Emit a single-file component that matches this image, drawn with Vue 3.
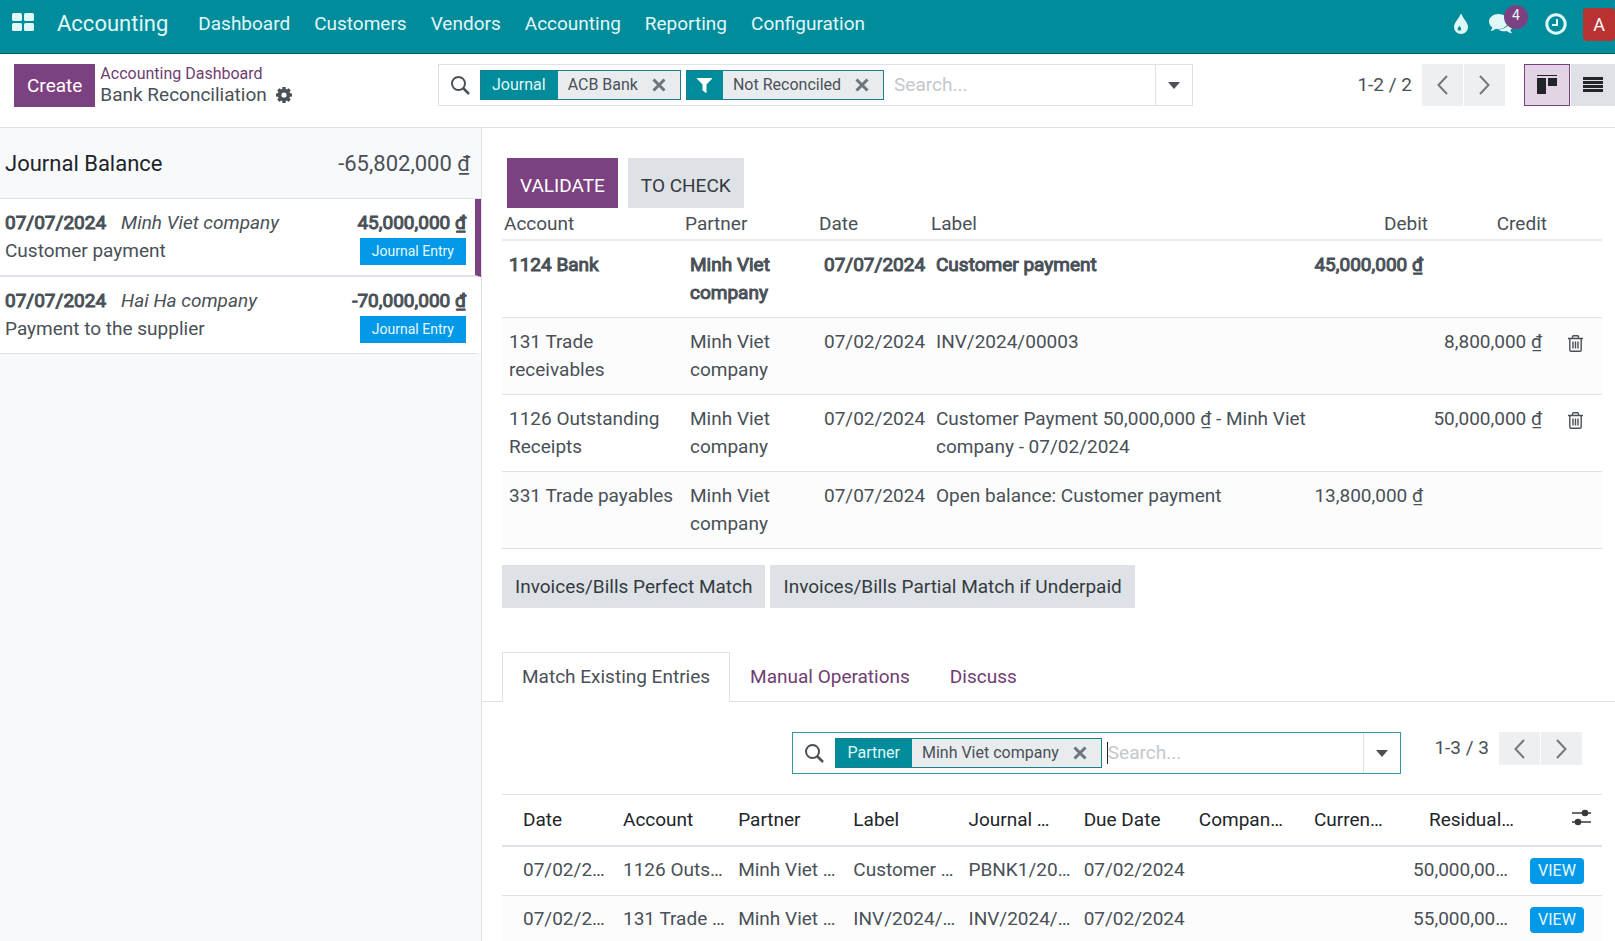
<script setup>
import { ref } from 'vue'

const menus = ['Dashboard', 'Customers', 'Vendors', 'Accounting', 'Reporting', 'Configuration']

const statements = [
  { date: '07/07/2024', partner: 'Minh Viet company', label: 'Customer payment', amount: '45,000,000 ₫', selected: true },
  { date: '07/07/2024', partner: 'Hai Ha company', label: 'Payment to the supplier', amount: '-70,000,000 ₫', selected: false },
]

const lines = [
  { account: '1124 Bank', partner: 'Minh Viet company', date: '07/07/2024', label: 'Customer payment', debit: '45,000,000 ₫', credit: '', main: true },
  { account: '131 Trade receivables', partner: 'Minh Viet company', date: '07/02/2024', label: 'INV/2024/00003', debit: '', credit: '8,800,000 ₫', removable: true },
  { account: '1126 Outstanding Receipts', partner: 'Minh Viet company', date: '07/02/2024', label: 'Customer Payment 50,000,000 ₫ - Minh Viet company - 07/02/2024', debit: '', credit: '50,000,000 ₫', removable: true },
  { account: '331 Trade payables', partner: 'Minh Viet company', date: '07/07/2024', label: 'Open balance: Customer payment', debit: '13,800,000 ₫', credit: '' },
]

const entryHeads = ['Date', 'Account', 'Partner', 'Label', 'Journal …', 'Due Date', 'Compan…', 'Curren…']
const entries = [
  { cells: ['07/02/2…', '1126 Outs…', 'Minh Viet …', 'Customer …', 'PBNK1/20…', '07/02/2024', '', ''], residual: '50,000,00…' },
  { cells: ['07/02/2…', '131 Trade …', 'Minh Viet …', 'INV/2024/…', 'INV/2024/…', '07/02/2024', '', ''], residual: '55,000,00…' },
]

const tabs = ['Match Existing Entries', 'Manual Operations', 'Discuss']
const activeTab = ref(tabs[0])
const search = ref('')
const entrySearch = ref('')
</script>

<template>
  <div class="app">
    <header class="topbar">
      <button class="apps" aria-label="Apps">
        <svg width="22" height="18" viewBox="0 0 22 18" fill="currentColor">
          <rect width="10" height="8" rx="1.5" /><rect x="12" width="10" height="8" rx="1.5" />
          <rect y="10" width="10" height="8" rx="1.5" /><rect x="12" y="10" width="10" height="8" rx="1.5" />
        </svg>
      </button>
      <a href="#" class="brand">Accounting</a>
      <nav class="menu">
        <a v-for="m in menus" :key="m" href="#">{{ m }}</a>
      </nav>
      <div class="systray">
        <button aria-label="Theme">
          <svg width="14" height="20" viewBox="0 0 14 20">
            <path fill="currentColor" d="M7 0c.5 0 .8.3.9.8C8.800 4.500 14 8.500 14 13a7 7 0 0 1-14 0C0 8.500 5.200 4.500 6.100.8 6.200.3 6.500 0 7 0z" />
            <path fill="#008c9a" d="M5.500 11.500c.4 1.400 1.700 2 1.700 3.500a1.800 1.800 0 0 1-3.600 0c0-1.500 1.500-2.100 1.900-3.500z" />
          </svg>
        </button>
        <button class="chat" aria-label="Messages">
          <svg width="25" height="20" viewBox="0 0 25 20" fill="currentColor">
            <path d="M9.500 0C14.800 0 19 3.300 19 7.500S14.800 15 9.500 15c-.9 0-1.800-.1-2.600-.3C5.500 15.800 3.500 16.700 1.500 16.900c.9-1 1.600-2.200 1.800-3.600C1.300 12 0 9.900 0 7.500 0 3.300 4.200 0 9.500 0z" />
            <path d="M20.600 5.500c2.400 1.200 3.900 3.100 3.900 5.400 0 2-1.200 3.900-3.200 5.200.3 1.200.9 2.200 1.900 3.100-2.200-.2-4-1-5.500-2.200-.8.200-1.500.3-2.400.3-2.400 0-4.600-.7-6.200-1.800 6.200.2 11.400-3.600 11.500-9z" />
          </svg>
          <span class="badge">4</span>
        </button>
        <button aria-label="Activities">
          <svg width="22" height="22" viewBox="0 0 22 22" fill="none" stroke="currentColor">
            <circle cx="11" cy="11" r="9.200" stroke-width="3" /><path d="M12 6v6H7" stroke-width="2" />
          </svg>
        </button>
        <button class="avatar">A</button>
      </div>
    </header>

    <section class="control">
      <div class="crumbs">
        <button class="btn primary">Create</button>
        <div class="trail">
          <a href="#">Accounting Dashboard</a>
          <div class="current">
            <span>Bank Reconciliation</span>
            <button class="plain" aria-label="Settings">
              <svg width="16" height="16" viewBox="0 0 16 16">
                <g fill="#495057">
                  <circle cx="8" cy="8" r="6.200" />
                  <rect v-for="a in [0, 45, 90, 135]" :key="a" x="6.300" y="0" width="3.400" height="16" rx=".6" :transform="`rotate(${a} 8 8)`" />
                </g>
                <circle cx="8" cy="8" r="2.600" fill="#fff" />
              </svg>
            </button>
          </div>
        </div>
      </div>

      <div class="searchbar">
        <svg class="lens" width="19" height="19" viewBox="0 0 19 19" fill="none" stroke="#495057" stroke-width="2"><circle cx="7.500" cy="7.500" r="6.500" /><path d="M12 12l6 6" stroke-width="2.500" /></svg>
        <div class="facet">
          <span class="facet-name">Journal</span>
          <span class="facet-value">ACB Bank
            <button class="plain" aria-label="Remove Journal"><svg width="14" height="14" viewBox="0 0 14 14" stroke="#6c757d" stroke-width="3"><path d="M1.500 1.500l11 11m0-11l-11 11" /></svg></button>
          </span>
        </div>
        <div class="facet">
          <span class="facet-name funnel"><svg width="15" height="15" viewBox="0 0 15 15" fill="#fff"><path d="M.6 0h13.800c.6 0 .8.700.4 1.100L9.500 6.500v7.900c0 .5-.6.800-1 .4l-2.700-2.300c-.2-.2-.3-.4-.3-.6V6.500L.2 1.100C-.2.700 0 0 .6 0z" /></svg></span>
          <span class="facet-value">Not Reconciled
            <button class="plain" aria-label="Remove filter"><svg width="14" height="14" viewBox="0 0 14 14" stroke="#6c757d" stroke-width="3"><path d="M1.500 1.500l11 11m0-11l-11 11" /></svg></button>
          </span>
        </div>
        <input v-model="search" type="text" placeholder="Search..." aria-label="Search">
        <button class="drop" aria-label="Search options"><svg width="12" height="7" viewBox="0 0 12 7" fill="#495057"><path d="M0 0h12L6 7z" /></svg></button>
      </div>

      <div class="views">
        <span class="count">1-2 / 2</span>
        <div class="pager">
          <button aria-label="Previous"><svg width="11" height="20" viewBox="0 0 11 20" fill="none" stroke="#777" stroke-width="2"><path d="M10 1L1.500 10 10 19" /></svg></button>
          <button aria-label="Next"><svg width="11" height="20" viewBox="0 0 11 20" fill="none" stroke="#777" stroke-width="2"><path d="M1 1l8.500 9L1 19" /></svg></button>
        </div>
        <div class="switch">
          <button class="on" aria-label="Kanban"><svg width="20" height="20" viewBox="0 0 20 20" fill="#212529"><path d="M0 0h20v1H0zM0 3h9v16H0zM11 3h9v8h-9z" /></svg></button>
          <button aria-label="List"><svg width="20" height="16" viewBox="0 0 20 16" fill="#212529"><path d="M0 0h20v3H0zM0 4h20v3H0zM0 8h20v3H0zM0 12h20v3H0z" /></svg></button>
        </div>
      </div>
    </section>

    <div class="body">
      <aside class="side">
        <div class="balance"><span class="title">Journal Balance</span><span>-65,802,000 ₫</span></div>
        <article v-for="s in statements" :key="s.partner" class="item" :class="{ selected: s.selected }">
          <div class="row">
            <div><span class="strong">{{ s.date }}</span><em>{{ s.partner }}</em></div>
            <span class="strong">{{ s.amount }}</span>
          </div>
          <div class="row"><span>{{ s.label }}</span><a href="#" class="tag">Journal Entry</a></div>
        </article>
      </aside>

      <main class="main">
        <div class="inner">
          <div class="actions">
            <button class="btn primary">VALIDATE</button>
            <button class="btn secondary">TO CHECK</button>
          </div>
          <table class="lines">
            <colgroup><col class="c-account"><col class="c-partner"><col class="c-date"><col><col class="c-money"><col class="c-money"><col class="c-trash"></colgroup>
            <thead>
              <tr><th>Account</th><th>Partner</th><th>Date</th><th>Label</th><th class="num">Debit</th><th class="num">Credit</th><th></th></tr>
            </thead>
            <tbody>
              <tr v-for="l in lines" :key="l.account" :class="{ strong: l.main }">
                <td>{{ l.account }}</td><td>{{ l.partner }}</td><td>{{ l.date }}</td><td>{{ l.label }}</td>
                <td class="num">{{ l.debit }}</td><td class="num">{{ l.credit }}</td>
                <td class="trash">
                  <button v-if="l.removable" class="plain" aria-label="Delete">
                    <svg width="15" height="17" viewBox="0 0 15 17" fill="none" stroke="#495057" stroke-width="1.400"><path d="M0 3.500h15M4.500 3V1.700c0-.5.4-.9.900-.9h4.200c.5 0 .9.400.9.900V3M1.800 3.500v11.600c0 .7.500 1.200 1.200 1.200h9c.7 0 1.200-.5 1.200-1.200V3.500M5 6.500v7M7.500 6.500v7M10 6.500v7" /></svg>
                  </button>
                </td>
              </tr>
            </tbody>
          </table>
          <div class="models">
            <button class="btn secondary">Invoices/Bills Perfect Match</button>
            <button class="btn secondary">Invoices/Bills Partial Match if Underpaid</button>
          </div>
        </div>

        <div class="tabs" role="tablist">
          <button v-for="t in tabs" :key="t" role="tab" :aria-selected="t === activeTab" :class="{ active: t === activeTab }" @click="activeTab = t">{{ t }}</button>
        </div>

        <div class="inner">
          <div class="finder">
            <div class="searchbar focused">
              <svg class="lens" width="19" height="19" viewBox="0 0 19 19" fill="none" stroke="#495057" stroke-width="2"><circle cx="7.500" cy="7.500" r="6.500" /><path d="M12 12l6 6" stroke-width="2.500" /></svg>
              <div class="facet">
                <span class="facet-name">Partner</span>
                <span class="facet-value">Minh Viet company
                  <button class="plain" aria-label="Remove Partner"><svg width="14" height="14" viewBox="0 0 14 14" stroke="#6c757d" stroke-width="3"><path d="M1.500 1.500l11 11m0-11l-11 11" /></svg></button>
                </span>
              </div>
              <input v-model="entrySearch" type="text" placeholder="Search..." aria-label="Search entries">
              <button class="drop" aria-label="Search options"><svg width="12" height="7" viewBox="0 0 12 7" fill="#495057"><path d="M0 0h12L6 7z" /></svg></button>
            </div>
            <span class="count">1-3 / 3</span>
            <div class="pager small">
              <button aria-label="Previous"><svg width="11" height="20" viewBox="0 0 11 20" fill="none" stroke="#777" stroke-width="2"><path d="M10 1L1.500 10 10 19" /></svg></button>
              <button aria-label="Next"><svg width="11" height="20" viewBox="0 0 11 20" fill="none" stroke="#777" stroke-width="2"><path d="M1 1l8.500 9L1 19" /></svg></button>
            </div>
          </div>
          <table class="entries">
            <colgroup><col class="e-date"><col v-for="n in 6" :key="n"><col class="e-currency"><col class="e-residual"><col class="e-view"></colgroup>
            <thead>
              <tr>
                <th v-for="h in entryHeads" :key="h">{{ h }}</th>
                <th class="num">Residual…</th>
                <th class="options">
                  <button class="plain" aria-label="Optional columns"><svg width="19" height="17" viewBox="0 0 19 17" fill="#343a40"><path d="M0 3.300h19v1.400H0zM0 12.300h19v1.400H0z" /><circle cx="13" cy="4" r="3.300" /><circle cx="6" cy="13" r="3.300" /></svg></button>
                </th>
              </tr>
            </thead>
            <tbody>
              <tr v-for="(e, i) in entries" :key="i">
                <td v-for="(c, j) in e.cells" :key="j">{{ c }}</td>
                <td class="num">{{ e.residual }}</td>
                <td><button class="view">VIEW</button></td>
              </tr>
            </tbody>
          </table>
        </div>
      </main>
    </div>
  </div>
</template>

<style>
body { margin: 0; }
</style>

<style scoped>
* { box-sizing: border-box; }
.app { height: 100vh; display: flex; flex-direction: column; overflow: hidden; background: #fff; color: #495057; font: 19px/28px Roboto, "Noto Sans", sans-serif; }
button, input { font: inherit; color: inherit; margin: 0; padding: 0; border: 0; border-radius: 0; background: none; }
button { cursor: pointer; }
a { color: inherit; text-decoration: none; }
svg { display: block; flex: none; }
.plain { display: inline-flex; }
.strong { -webkit-text-stroke: 1px currentColor; }
.num { text-align: right; }

.topbar { flex: none; height: 54px; display: flex; align-items: center; padding: 0 0 6px 12px; background: #008c9a; border-bottom: 1px solid #0a5860; color: #e0f7f8; }
.apps { margin-right: 23px; padding-bottom: 3px; }
.brand { font-size: 22px; margin-right: 30px; }
.menu { display: flex; gap: 24px; }
.systray { display: flex; align-items: center; margin-left: auto; gap: 21px; }
.chat { position: relative; }
.badge { position: absolute; left: 15px; top: -9px; width: 24px; height: 24px; border-radius: 12px; background: #7c4180; font-size: 14px; line-height: 20px; text-align: center; }
.chat + button { margin-left: 10px; }
.avatar { width: 32px; height: 33px; margin: 2px 0 0 -5px; border-radius: 4px; background: #b83232; color: #fff; font-size: 18px; }

.control { flex: none; display: grid; grid-template-columns: 424px minmax(0, 1fr) 408px; column-gap: 14px; height: 74px; padding-top: 10px; border-bottom: 1px solid #dee2e6; align-items: start; }
.crumbs { display: flex; gap: 5px; padding-left: 14px; }
.btn { height: 43px; padding: 0 13px; white-space: nowrap; }
.primary { background: #7c4180; color: #fff; }
.secondary { background: #dee2e6; color: #343a40; }
.trail { line-height: 21px; white-space: nowrap; }
.trail a { display: block; color: #6f3d72; font-size: 16px; line-height: 20px; }
.current { display: flex; align-items: center; gap: 9px; }
.searchbar { display: flex; align-items: center; height: 42px; border: 1px solid #dee2e6; padding-left: 12px; font-size: 16px; }
.lens { margin-right: 10px; }
.facet { display: flex; height: 30px; margin-right: 5px; border: 1px solid #1a7f8a; line-height: 28px; white-space: nowrap; }
.facet-name { padding: 0 12px 0 11px; background: #008c9a; color: #e0f7f8; }
.funnel { display: flex; align-items: center; padding: 0 11px 0 10px; }
.facet-value { display: flex; align-items: center; gap: 14px; padding: 0 14px 0 10px; background: #e9ecef; }
.searchbar input { flex: 1; min-width: 0; height: 22px; margin-left: 5px; outline: 0; font-size: 19px; }
.searchbar input::placeholder { color: #c3c8cd; opacity: 1; }
.drop { width: 37px; height: 40px; display: flex; align-items: center; justify-content: center; border-left: 1px solid #dee2e6; }
.views { display: flex; align-items: center; justify-content: flex-end; }
.count { white-space: nowrap; }
.pager { display: flex; gap: 1px; margin-left: 10px; }
.pager button { width: 41px; height: 42px; display: flex; align-items: center; justify-content: center; background: #eeeff1; }
.pager.small button { height: 33px; }
.switch { display: flex; gap: 1px; margin-left: 19px; }
.switch button { width: 44px; height: 42px; display: flex; align-items: center; justify-content: center; background: #dee2e6; }
.switch .on { width: 46px; background: #e2d4e4; border: 1px solid #7c4180; }

.body { flex: 1; min-height: 0; display: flex; }
.side { flex: none; width: 482px; background: #f8f9fa; border-right: 1px solid #dee2e6; }
.balance { display: flex; justify-content: space-between; padding: 22px 11px 20px 5px; border-bottom: 1px solid #dee2e6; font-size: 22px; }
.title { color: #212529; }
.item { padding: 10px 9px 10px 5px; border-right: 6px solid #fff; border-bottom: 1px solid #dee2e6; background: #fff; }
.item.selected { border-right-color: #7c4180; border-bottom-width: 2px; }
.row { display: flex; justify-content: space-between; align-items: center; height: 28px; white-space: nowrap; }
.row em { margin-left: 15px; }
.tag { padding: 0 12px; background: #0398e8; color: #e6f8ff; font-size: 14px; line-height: 27px; }

.main { flex: 1; min-width: 0; overflow: hidden; }
.inner { padding: 0 13px 0 20px; }
.actions { display: flex; gap: 10px; padding: 30px 0 0 5px; }
.actions .btn { height: 50px; padding-top: 6px; }
table { width: 100%; table-layout: fixed; border-collapse: separate; border-spacing: 0; }
th { font-weight: 400; text-align: left; white-space: nowrap; }
th.num { text-align: right; }
.c-account { width: 181px; } .c-partner { width: 134px; } .c-date { width: 112px; }
.c-money { width: 119px; } .c-trash { width: 53px; }
.lines th { padding: 2px 2px 1px; border-bottom: 2px solid #e9ecef; }
.lines td { padding: 10px 7px 10px; border-bottom: 1px solid #dee2e6; vertical-align: top; }
.lines td:nth-child(3), .lines .num { white-space: nowrap; }
.lines td:nth-child(4) { padding-right: 0; }
.lines td.num { padding-left: 0; }
.lines tbody tr:nth-child(even), .entries tbody tr:nth-child(even) { background: #fcfcfc; }
.lines .trash { padding: 17px 0 0 19px; line-height: 17px; }
.models { display: flex; gap: 5px; padding-top: 16px; }

.tabs { display: flex; margin-top: 44px; padding-left: 20px; height: 50px; border-bottom: 1px solid #dee2e6; }
.tabs button { height: 50px; padding: 0 19px; border: 1px solid transparent; color: #6f3d72; white-space: nowrap; }
.tabs .active { border-color: #dee2e6; border-bottom-color: #fff; background: #fff; color: #495057; }

.finder { display: flex; align-items: flex-start; justify-content: flex-end; padding: 30px 20px 20px 0; }
.finder .searchbar { flex: 0 1 609px; }
.finder .lens { margin-right: 11px; }
.finder .searchbar input { margin-left: 0; border-left: 1px solid #212529; }
.focused { border-color: #2c9aa4; }
.finder .count { margin-left: 33px; line-height: 32px; }
.e-date { width: 114px; } .e-currency { width: 98px; } .e-residual { width: 110px; } .e-view { width: 87px; }
.entries { border-top: 1px solid #dee2e6; white-space: nowrap; }
.entries th { height: 52px; padding: 0 7px; border-bottom: 2px solid #dee2e6; color: #212529; }
.entries td { height: 49px; padding: 0 7px 2px; border-bottom: 1px solid #dee2e6; }
.entries th:first-child, .entries td:first-child { padding-left: 21px; }
.entries td.num { padding-left: 0; padding-right: 7px; }
.entries th.num { padding: 0 1px 0 0; }
.entries .options { text-align: right; padding-right: 11px; }
.entries td:last-child { padding: 0 0 0 15px; }
.view { display: block; height: 26px; padding: 0 8px; border-radius: 4px; background: #0398e8; color: #e6f8ff; font-size: 16px; line-height: 26px; }
</style>
